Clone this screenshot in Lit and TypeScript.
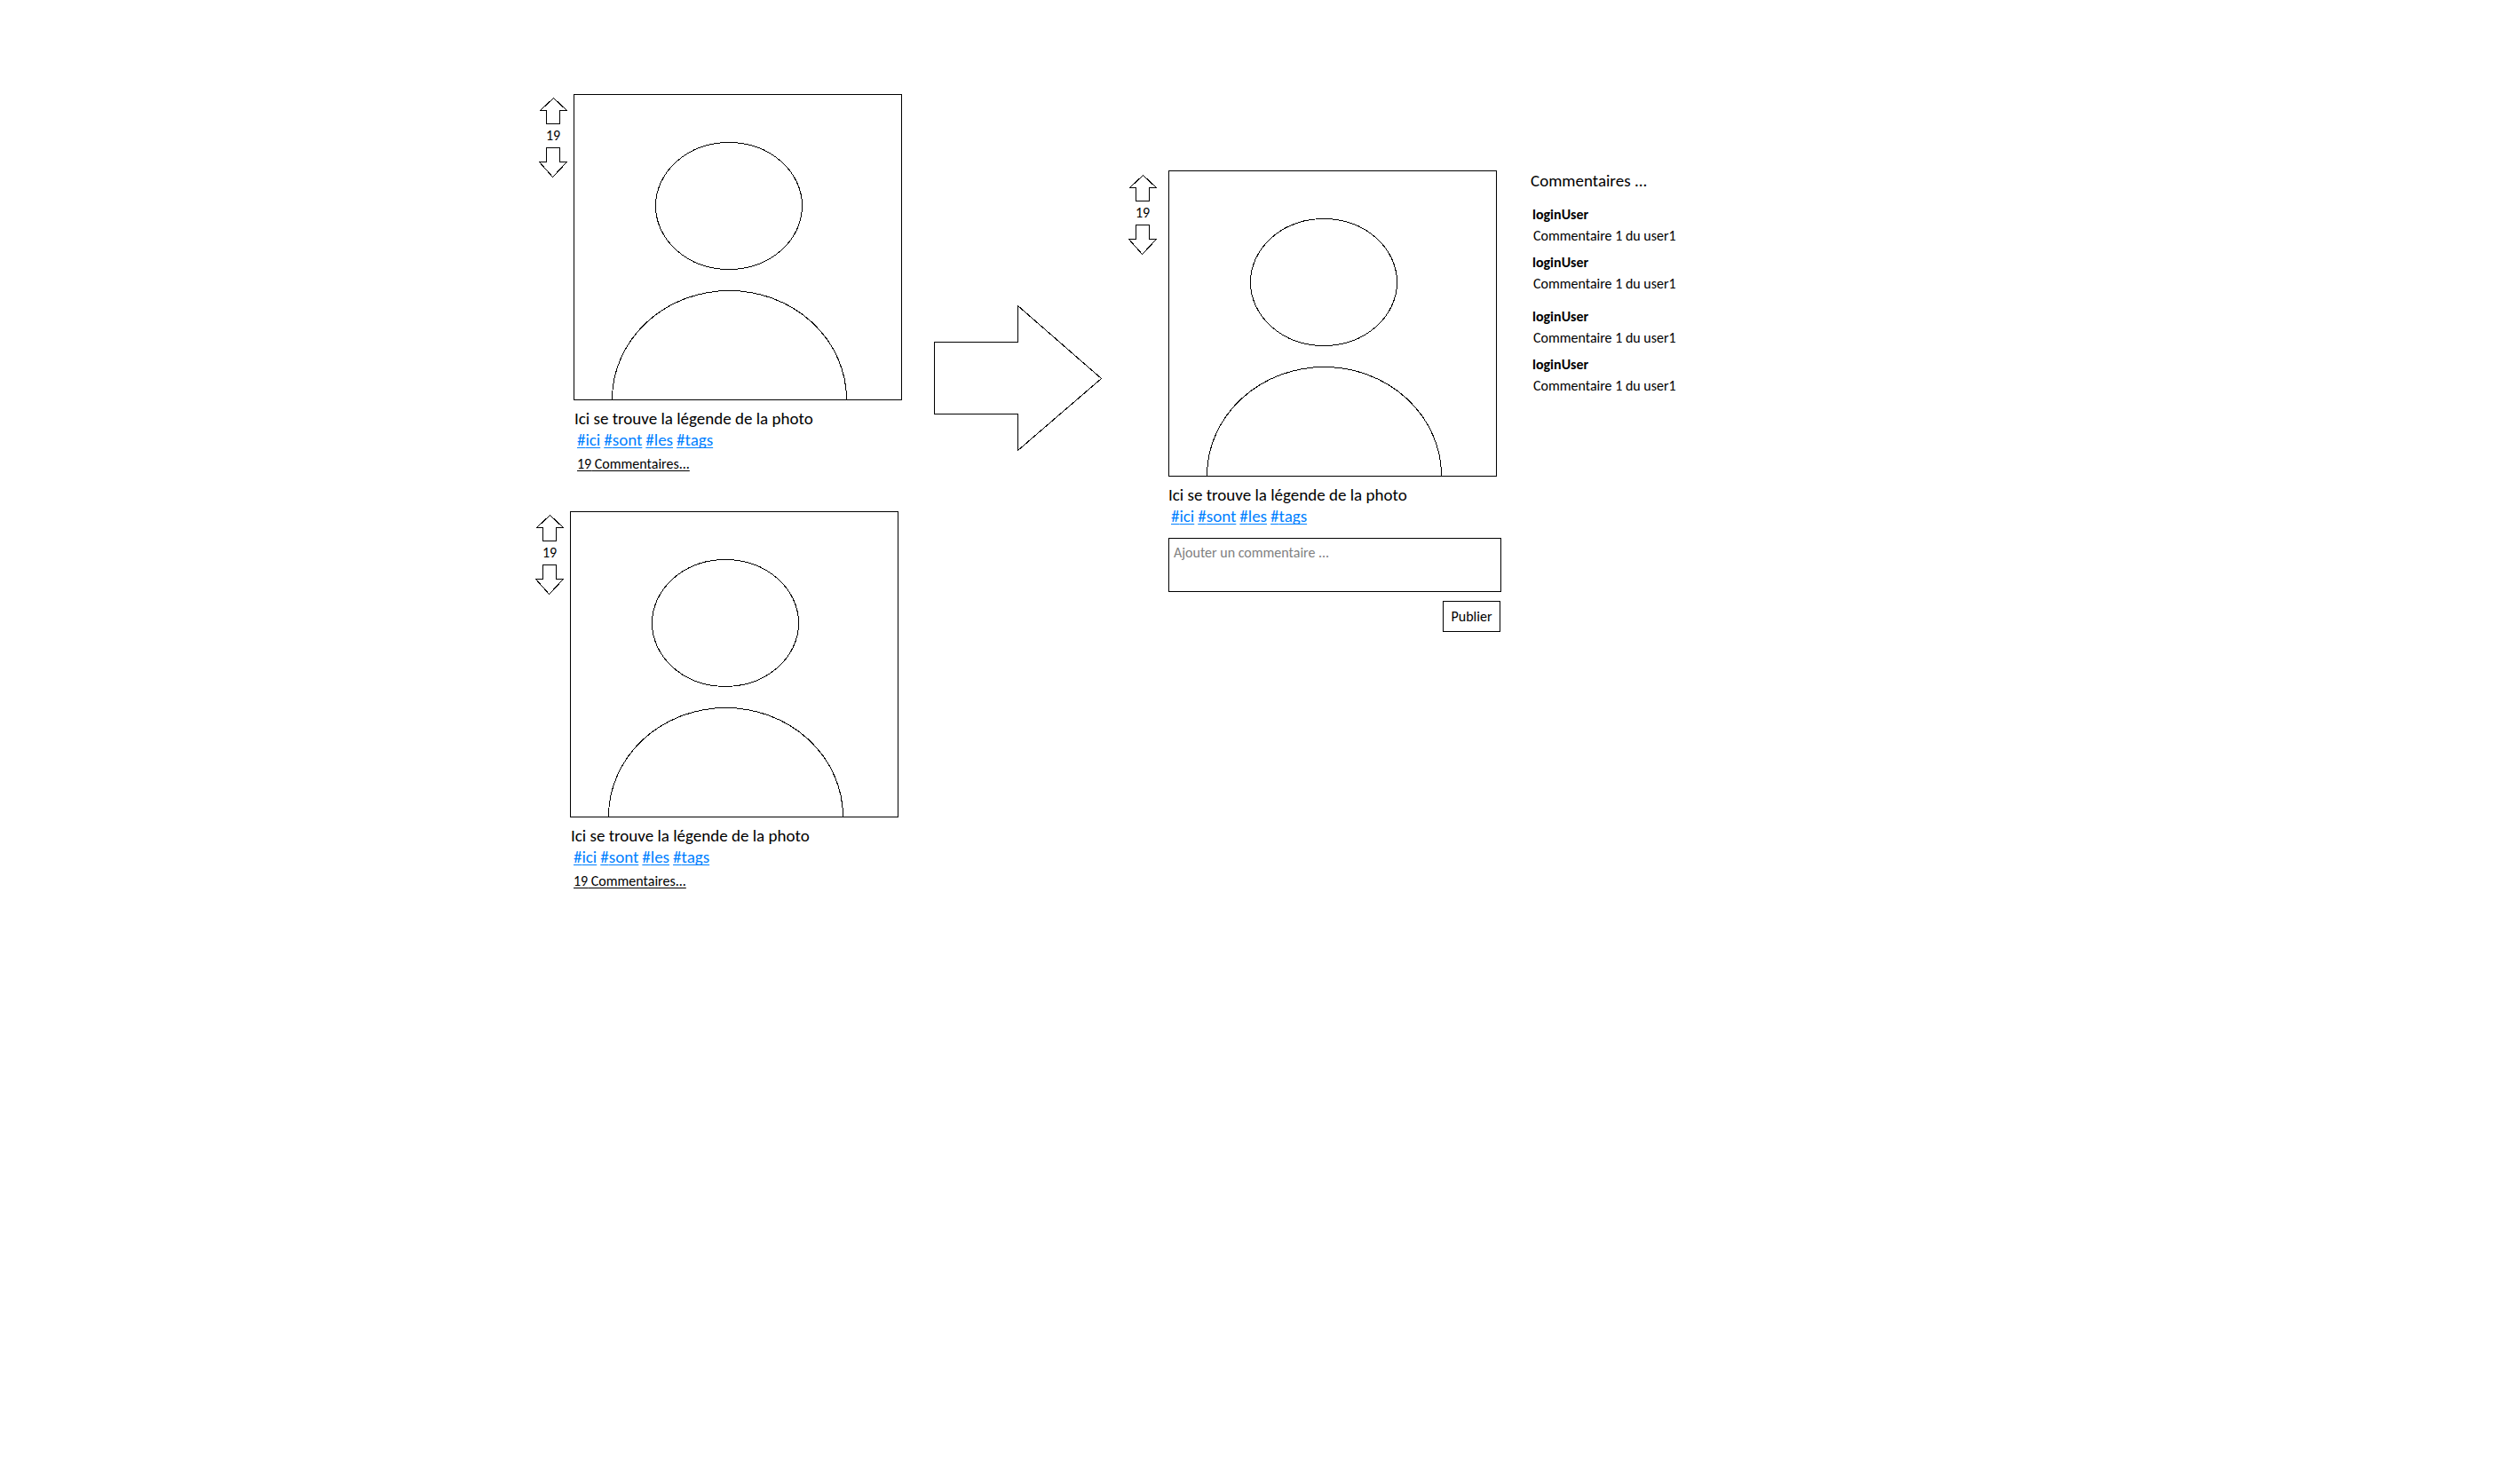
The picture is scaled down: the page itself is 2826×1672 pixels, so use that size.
import { LitElement, html, css, nothing } from "lit";
import { customElement, property } from "lit/decorators.js";

@customElement("vote-control")
class VoteControl extends LitElement {
  @property({ type: Number }) score = 0;

  static styles = css`
    :host {
      display: flex;
      flex-direction: column;
      align-items: center;
      width: 32px;
      font-size: 16px;
      line-height: 26px;
    }
    .vote {
      display: block;
      padding: 0;
      border: 0;
      background: none;
      cursor: pointer;
    }
    .icon {
      display: block;
      fill: #fff;
      stroke: #000;
      shape-rendering: crispEdges;
    }
  `;

  render() {
    return html`
      <button class="vote" type="button" aria-label="Voter pour">
        <svg class="icon" width="32" height="30" viewBox="0 0 32 30">
          <path d="M16.5 .5 31.5 14.5H23.5V29.5H8.5V14.5H1.5Z" />
        </svg>
      </button>
      <span>${this.score}</span>
      <button class="vote" type="button" aria-label="Voter contre">
        <svg class="icon" width="32" height="34" viewBox="0 0 32 34">
          <path d="M8.5 .5H23.5V16.5H31.5L15.5 33.5 .5 16.5H8.5Z" />
        </svg>
      </button>
    `;
  }
}

@customElement("photo-post")
class PhotoPost extends LitElement {
  @property({ type: Number }) score = 0;
  @property() caption = "";
  @property({ attribute: false }) tags: string[] = [];
  @property({ type: Number }) comments = 0;
  @property({ type: Boolean, reflect: true }) detail = false;

  static styles = css`
    :host {
      display: flex;
      align-items: flex-start;
      gap: 7px;
    }
    :host([detail]) {
      gap: 13px;
    }
    .votes {
      padding-top: 4px;
    }
    :host([detail]) .votes {
      padding-top: 5px;
    }
    .photo {
      display: block;
      fill: none;
      stroke: #000;
      shape-rendering: crispEdges;
    }
    .caption {
      margin: 9px 0 0 1px;
      font-size: 19px;
      line-height: 24px;
    }
    :host([detail]) .caption {
      margin-left: 0;
    }
    .tags {
      display: flex;
      gap: 4px;
      padding-left: 4px;
      font-size: 19px;
      line-height: 24px;
    }
    :host([detail]) .tags {
      padding-left: 3px;
    }
    .tag {
      color: #0080ff;
      text-underline-offset: 2px;
      text-decoration-thickness: 1px;
      text-decoration-skip-ink: none;
    }
    .more {
      display: block;
      margin: 3px 0 0 4px;
      color: #000;
      font-size: 16px;
      line-height: 24px;
      text-underline-offset: 2px;
      text-decoration-thickness: 1px;
    }
    .form {
      display: flex;
      flex-direction: column;
      align-items: flex-end;
      gap: 10px;
      width: 375px;
      margin-top: 12px;
    }
    .field {
      box-sizing: border-box;
      width: 100%;
      height: 61px;
      padding: 4px 5px;
      border: 1px solid #000;
      border-radius: 0;
      background: #fff;
      font: inherit;
      font-size: 16px;
      line-height: 24px;
      resize: none;
      display: block;
    }
    .field::placeholder {
      color: #7f7f7f;
      opacity: 1;
    }
    .send {
      margin-right: 1px;
      width: 65px;
      height: 35px;
      padding: 0;
      border: 1px solid #000;
      background: #fff;
      color: #000;
      font: inherit;
      font-size: 16px;
    }
  `;

  render() {
    return html`
      <vote-control class="votes" .score=${this.score}></vote-control>
      <div>
        <svg class="photo" width="370" height="345" viewBox="0 0 370 345" role="img" aria-label="Photo">
          <rect x=".5" y=".5" width="369" height="344" />
          <ellipse cx="175" cy="126" rx="82.5" ry="71.5" />
          <path d="M43.5 344A132 122.5 0 0 1 307.5 344" />
        </svg>
        <p class="caption">${this.caption}</p>
        <div class="tags">${this.tags.map((t) => html`<a class="tag" href="#${t}">#${t}</a>`)}</div>
        ${this.detail
          ? html`<form class="form">
              <textarea class="field" aria-label="Commentaire" placeholder="Ajouter un commentaire ..."></textarea>
              <button class="send" type="button">Publier</button>
            </form>`
          : this.comments
            ? html`<a class="more" href="#commentaires">${this.comments} Commentaires...</a>`
            : nothing}
      </div>
    `;
  }
}

@customElement("comment-list")
class CommentList extends LitElement {
  @property({ attribute: false }) threads: { user: string; text: string }[][] = [];

  static styles = css`
    .title {
      margin: 0 0 14px;
      font-size: 19px;
      font-weight: 400;
      line-height: 24px;
    }
    .threads {
      display: flex;
      flex-direction: column;
      gap: 13px;
      padding-left: 2px;
    }
    .thread {
      display: flex;
      flex-direction: column;
      gap: 6px;
      font-size: 16px;
      line-height: 24px;
    }
    .comment,
    .text {
      margin: 0;
    }
    .user {
      font-weight: 700;
    }
    .text {
      padding-left: 1px;
    }
  `;

  render() {
    return html`
      <h2 class="title">Commentaires ...</h2>
      <div class="threads">
        ${this.threads.map(
          (thread) => html`<div class="thread">
            ${thread.map(
              (c) => html`<article class="comment">
                <div class="user">${c.user}</div>
                <p class="text">${c.text}</p>
              </article>`
            )}
          </div>`
        )}
      </div>
    `;
  }
}

const caption = "Ici se trouve la légende de la photo";
const tags = ["ici", "sont", "les", "tags"];
const comment = { user: "loginUser", text: "Commentaire 1 du user1" };
const threads = [
  [comment, comment],
  [comment, comment],
];

@customElement("app-root")
class AppRoot extends LitElement {
  static styles = css`
    :host {
      display: block;
      min-height: 100vh;
      background: #fff;
      color: #000;
      font-family: Calibri, Carlito, Lato, sans-serif;
    }
    .board {
      display: grid;
      grid-template-columns: minmax(24px, 603fr) auto minmax(24px, 926fr);
      padding: 106px 0;
    }
    .flow {
      grid-column: 2;
      display: flex;
      align-items: flex-start;
    }
    .feed {
      display: flex;
      flex-direction: column;
      gap: 41px;
      width: 413px;
    }
    .first {
      padding-left: 4px;
    }
    .next {
      flex: none;
      margin: 238px 29px 0 36px;
      fill: none;
      stroke: #000;
      shape-rendering: crispEdges;
    }
    .detail {
      padding-top: 86px;
    }
    .comments {
      width: 176px;
      margin-left: 33px;
      padding-top: 86px;
    }
  `;

  render() {
    return html`
      <main class="board">
        <div class="flow">
          <section class="feed">
            <photo-post class="first" .score=${19} .caption=${caption} .tags=${tags} .comments=${19}></photo-post>
            <photo-post .score=${19} .caption=${caption} .tags=${tags} .comments=${19}></photo-post>
          </section>
          <svg class="next" width="190" height="164" viewBox="0 0 190 164" aria-hidden="true">
            <path d="M.5 41.5H94.5V.5L188.5 82.5 94.5 163.5V122.5H.5Z" />
          </svg>
          <photo-post class="detail" detail .score=${19} .caption=${caption} .tags=${tags}></photo-post>
          <comment-list class="comments" .threads=${threads}></comment-list>
        </div>
      </main>
    `;
  }
}
